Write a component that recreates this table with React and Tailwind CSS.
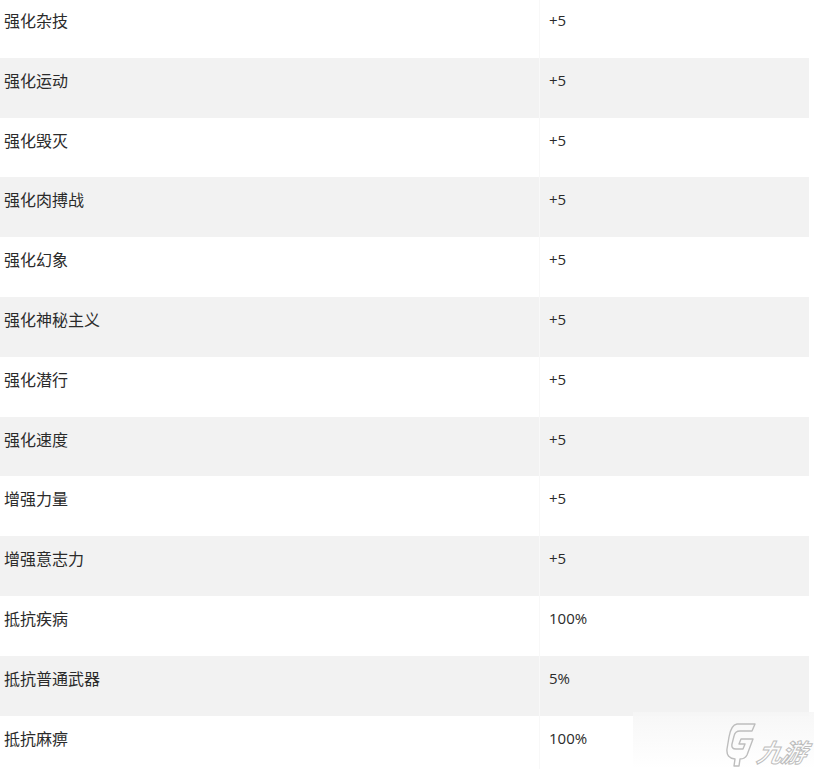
const rows = [
    ["强化杂技", "+5"],
    ["强化运动", "+5"],
    ["强化毁灭", "+5"],
    ["强化肉搏战", "+5"],
    ["强化幻象", "+5"],
    ["强化神秘主义", "+5"],
    ["强化潜行", "+5"],
    ["强化速度", "+5"],
    ["增强力量", "+5"],
    ["增强意志力", "+5"],
    ["抵抗疾病", "100%"],
    ["抵抗普通武器", "5%"],
    ["抵抗麻痹", "100%"],
];

const Watermark = () => (
    <div className="absolute left-[633px] top-[712px] w-[181px] h-[57px] bg-gradient-to-b from-[#f6f6f6]/90 to-white/95">
        <div className="absolute left-[92px] top-[10px] flex items-end">
            <svg width="32" height="46" viewBox="0 0 32 46" fill="none">
                <path
                    d="M12 2 L30 2 L27 9 L15 9 Q10 9 9 14 L7 22 Q6 27 11 27 L18 27 L20 22 L14 22 L16 17 L28 17 L22 33 Q20 37 15 37 L14 44 L9 44 L10 37 Q1 36 2 27 L4 15 Q6 3 12 2 Z"
                    stroke="#bdbdbd"
                    strokeWidth="1.4"
                    strokeLinejoin="round"
                />
            </svg>
            <span
                className="ml-[1px] mb-[4px] text-[25px] leading-none italic font-bold tracking-[-1px] text-transparent [-webkit-text-stroke:1px_#bdbdbd] [transform:skewX(-12deg)]"
                style={{ fontFamily: '"Noto Sans CJK SC", sans-serif' }}
            >
                九游
            </span>
        </div>
    </div>
);

export default function App() {
    return (
        <div
            className="relative w-[814px] h-[769px] overflow-hidden bg-white text-[#2b2b2b]"
            style={{ fontFamily: '"Segoe UI", "Open Sans", "Noto Sans CJK SC", sans-serif' }}
        >
            <div className="w-[809px] -mt-[2px]">
                {rows.map(([name, value], i) => (
                    <div
                        key={name}
                        className={
                            "flex h-[59.8px] leading-6 " +
                            (i % 2 === 1 ? "bg-[#f2f2f2]" : "bg-white")
                        }
                    >
                        <div
                            className="w-[540px] pl-[4px] pt-[10px] text-[16px] border-r border-[#f8f8f8]"
                            style={{ fontFamily: '"Noto Sans CJK SC", sans-serif' }}
                        >
                            {name}
                        </div>
                        <div className="flex-1 pl-[9px] pt-[10px] text-[15px]">{value}</div>
                    </div>
                ))}
            </div>
            <Watermark />
        </div>
    );
}
